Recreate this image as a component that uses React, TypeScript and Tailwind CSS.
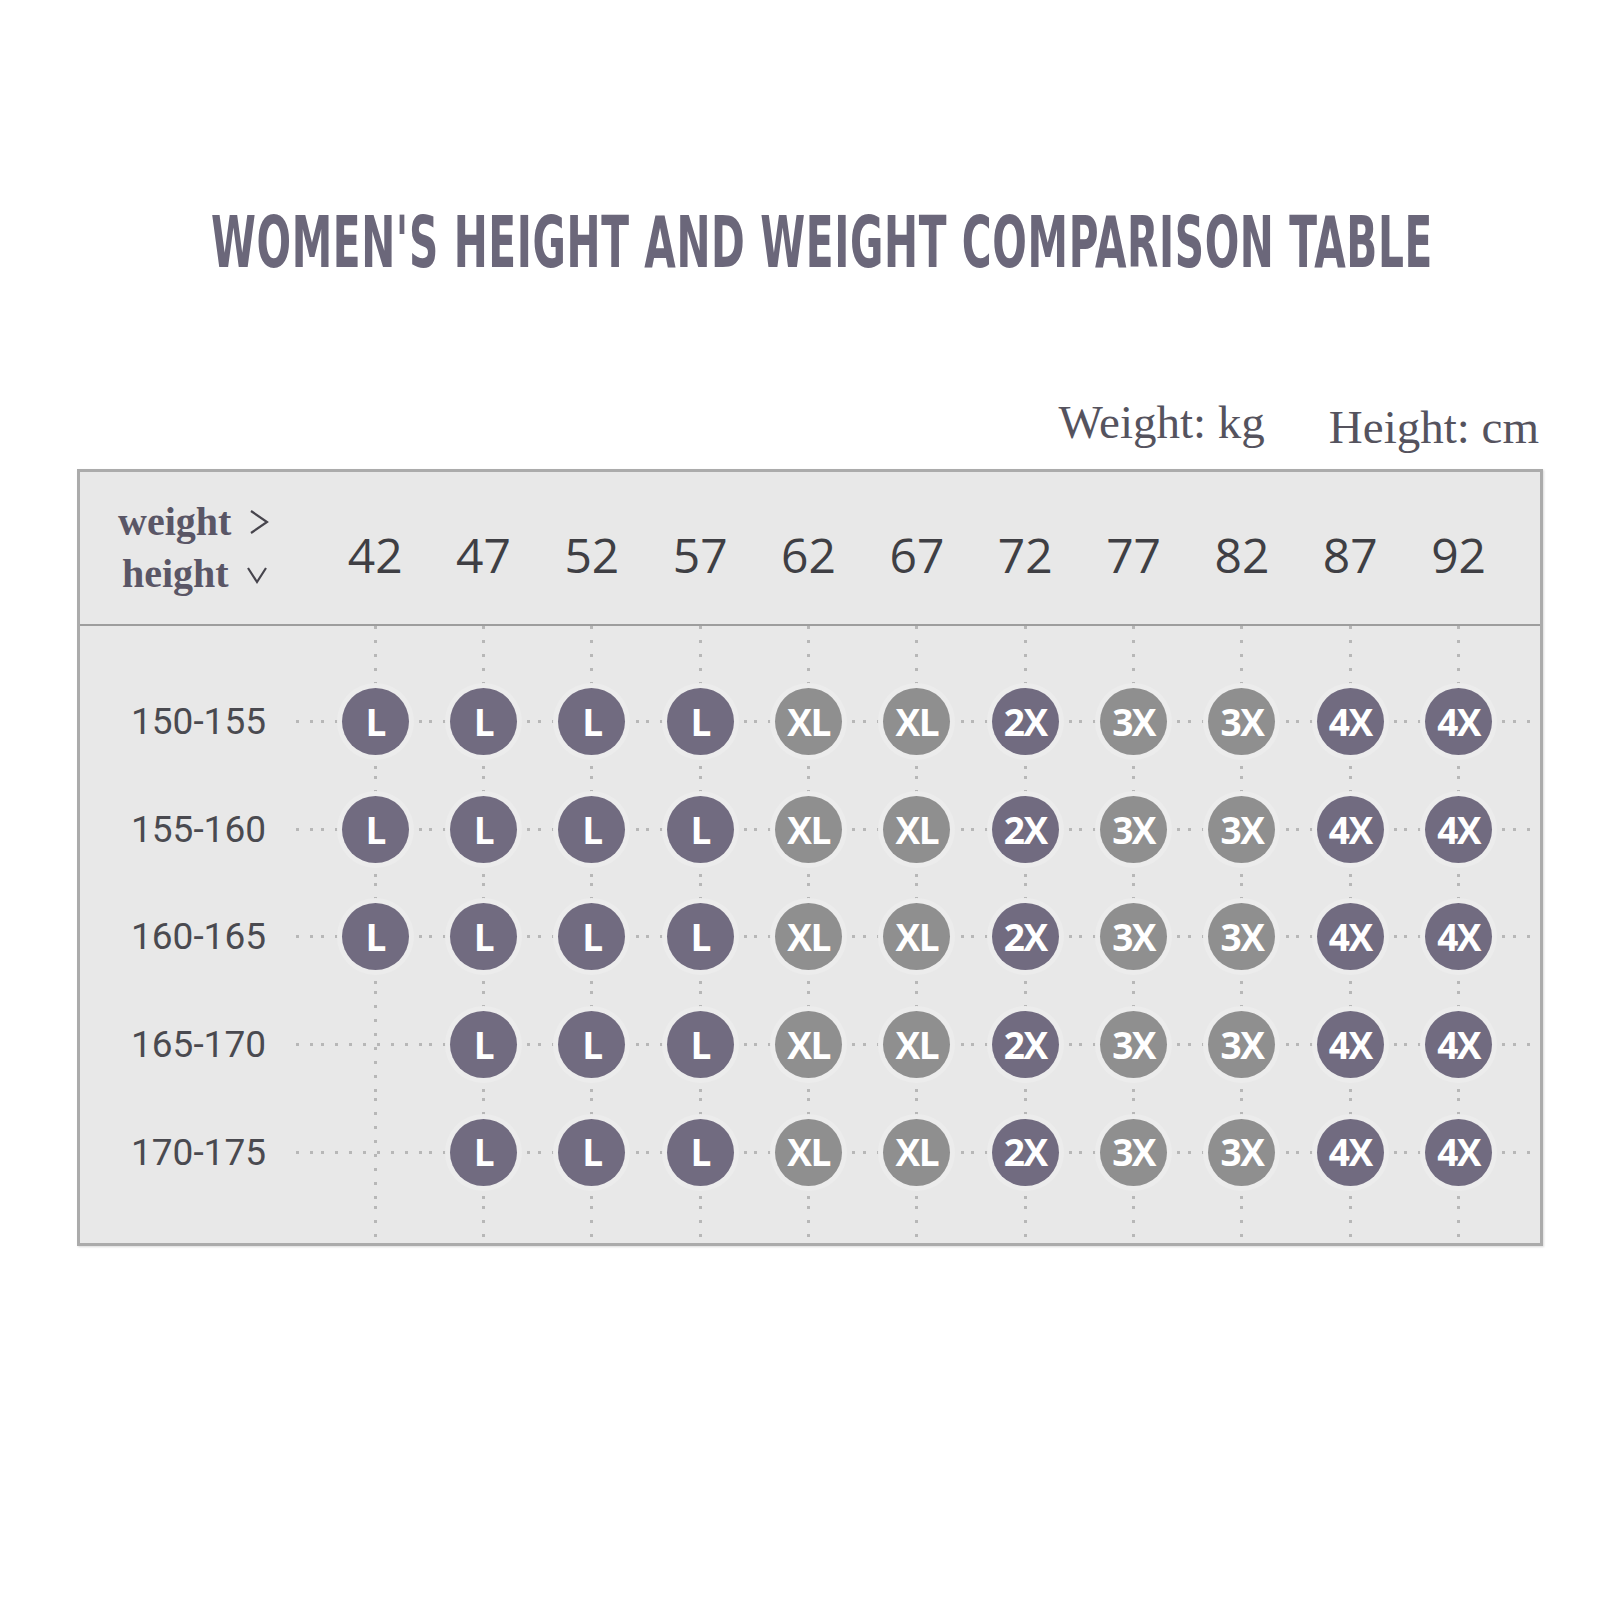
const weights = [42, 47, 52, 57, 62, 67, 72, 77, 82, 87, 92];

const rows: { label: string; sizes: string[] }[] = [
  { label: "150-155", sizes: ["L", "L", "L", "L", "XL", "XL", "2X", "3X", "3X", "4X", "4X"] },
  { label: "155-160", sizes: ["L", "L", "L", "L", "XL", "XL", "2X", "3X", "3X", "4X", "4X"] },
  { label: "160-165", sizes: ["L", "L", "L", "L", "XL", "XL", "2X", "3X", "3X", "4X", "4X"] },
  { label: "165-170", sizes: ["", "L", "L", "L", "XL", "XL", "2X", "3X", "3X", "4X", "4X"] },
  { label: "170-175", sizes: ["", "L", "L", "L", "XL", "XL", "2X", "3X", "3X", "4X", "4X"] },
];

const DOT_V =
  "bg-[repeating-linear-gradient(to_bottom,#b7b7b7_0px,#b7b7b7_3px,transparent_3px,transparent_14px)]";
const DOT_H =
  "bg-[repeating-linear-gradient(to_right,#b7b7b7_0px,#b7b7b7_3px,transparent_3px,transparent_14px)]";

const Badge = ({ size }: { size: string }) => {
  const dark = size === "L" || size === "2X" || size === "4X";
  return (
    <div
      className={`flex h-[67px] w-[67px] items-center justify-center rounded-full ring-[5px] ring-[#ececec] font-['Open_Sans',sans-serif] text-[37px] font-bold tracking-[-1.5px] text-white ${
        dark ? "bg-[#716b80]" : "bg-[#8f8f8f]"
      }`}
    >
      {size}
    </div>
  );
};

const Cell = ({ size, horizontal = true }: { size?: string; horizontal?: boolean }) => (
  <div className="grid h-full w-[108.35px] shrink-0 grid-cols-1 grid-rows-1">
    <div className={`col-start-1 row-start-1 w-[3px] self-stretch justify-self-center ${DOT_V}`} />
    {horizontal && (
      <div className={`col-start-1 row-start-1 h-[3px] self-center justify-self-stretch ${DOT_H}`} />
    )}
    {size && (
      <div className="col-start-1 row-start-1 self-center justify-self-center">
        <Badge size={size} />
      </div>
    )}
  </div>
);

const Spacer = ({ h }: { h: string }) => (
  <div className={`flex ${h}`}>
    <div className="w-[241px] shrink-0" />
    {weights.map((w) => (
      <Cell key={w} horizontal={false} />
    ))}
  </div>
);

const Chevron = ({ dir }: { dir: "right" | "down" }) => (
  <svg width="24" height="28" viewBox="0 0 24 28" className="ml-[16px]">
    <path
      d={dir === "right" ? "M4 3 L20 14 L4 25" : "M3 8 L12 22 L21 8"}
      fill="none"
      stroke="#47454d"
      strokeWidth="2.2"
    />
  </svg>
);

export default function App() {
  return (
    <div className="min-h-[1600px] w-[1600px] bg-white">
      <div className="flex justify-center pt-[206px] pl-[44px]">
        <h1 className="inline-block scale-x-[0.628] whitespace-nowrap font-['DejaVu_Sans_Condensed','DejaVu_Sans',sans-serif] text-[72px] font-bold leading-none tracking-[1px] text-[#6b677a]">
          WOMEN'S HEIGHT AND WEIGHT COMPARISON TABLE
        </h1>
      </div>

      <div className="mt-[126px] flex items-end justify-end gap-[64px] pr-[61px] font-['Liberation_Serif',serif] text-[47px] leading-none text-[#55535e]">
        <span className="-translate-y-[5px]">Weight: kg</span>
        <span>Height: cm</span>
      </div>

      <div className="ml-[77px] mt-[18px] w-[1466px] border-[3px] border-[#ababab] bg-[#e8e8e8] shadow-[1px_1px_2px_rgba(0,0,0,0.15)]">
        <div className="flex h-[154px] items-center border-b-2 border-[#9d9d9d]">
          <div className="flex w-[241px] shrink-0 flex-col pl-[38px] font-['Liberation_Serif',serif] text-[40px] font-bold leading-[52px] text-[#5a5666]">
            <div className="flex items-center">
              <span>weight</span>
              <Chevron dir="right" />
            </div>
            <div className="flex items-center pl-[4px]">
              <span>height</span>
              <Chevron dir="down" />
            </div>
          </div>
          {weights.map((w) => (
            <div
              key={w}
              className="w-[108.35px] shrink-0 pt-[14px] text-center font-['Open_Sans',sans-serif] text-[48px] leading-none text-[#3f3f44]"
            >
              {w}
            </div>
          ))}
        </div>

        <Spacer h="h-[42px]" />
        {rows.map((r) => (
          <div key={r.label} className="flex h-[107.6px] items-center">
            <div className="flex h-full w-[241px] shrink-0 items-center">
              <span className="ml-[51px] w-[165px] font-['Roboto',sans-serif] text-[37px] leading-none text-[#4a4a50]">
                {r.label}
              </span>
              <div className={`h-[3px] flex-1 ${DOT_H}`} />
            </div>
            {r.sizes.map((s, i) => (
              <Cell key={i} size={s} />
            ))}
            <div className={`h-[3px] w-[18px] ${DOT_H}`} />
          </div>
        ))}
        <Spacer h="h-[37px]" />
      </div>
    </div>
  );
}
